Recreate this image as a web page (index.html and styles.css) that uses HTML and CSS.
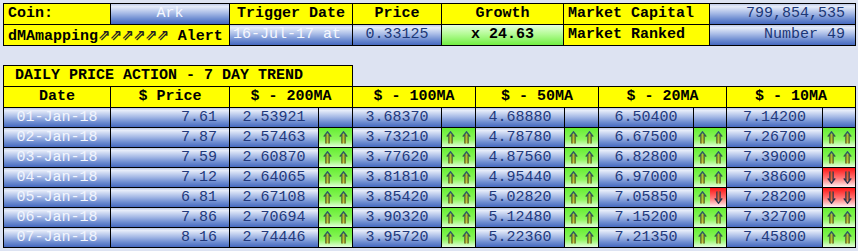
FILE: index.html
```html
<!DOCTYPE html>
<html>
<head>
<meta charset="utf-8">
<link rel="stylesheet" href="styles.css">
</head>
<body>
<svg class="defs" width="0" height="0" aria-hidden="true">
  <defs>
    <linearGradient id="ag" x1="0" y1="0" x2="0" y2="1">
      <stop offset="0" stop-color="#2d5a6a"/>
      <stop offset="1" stop-color="#5a5a10"/>
    </linearGradient>
    <symbol id="up" viewBox="0 0 9 13">
      <path d="M0.8 5.6 L4.5 0.9 L8.2 5.6 M3 3 V12.5 M6 3 V12.5" fill="none" stroke="url(#ag)" stroke-width="1.5"/>
      <path d="M3.9 3.2 V12.3 M5.1 3.2 V12.3" fill="none" stroke="#c8a018" stroke-width="0.8"/>
    </symbol>
    <symbol id="dn" viewBox="0 0 9 13">
      <path d="M0.8 7.4 L4.5 12.1 L8.2 7.4 M3 0.5 V10 M6 0.5 V10" fill="none" stroke="#2a3550" stroke-width="1.5"/>
      <path d="M3.9 0.7 V9.8 M5.1 0.7 V9.8" fill="none" stroke="#c06020" stroke-width="0.8"/>
    </symbol>
  </defs>
</svg>
<div class="summary">
  <div class="c y lft">Coin:</div>
  <div class="c b ctr wt">Ark</div>
  <div class="c y ctr">Trigger Date</div>
  <div class="c y ctr">Price</div>
  <div class="c y ctr">Growth</div>
  <div class="c y lft">Market Capital</div>
  <div class="c b rgt nb">799,854,535</div>
  <div class="c y lft span2">dMAmapping<span class="ne">⇗⇗⇗⇗⇗⇗</span> Alert</div>
  <div class="c b lft2 wt">16-Jul-17 at</div>
  <div class="c b ctr nb">0.33125</div>
  <div class="c g ctr">x 24.63</div>
  <div class="c y lft">Market Ranked</div>
  <div class="c b rgt nb">Number 49</div>
</div>

<div class="title">DAILY PRICE ACTION - 7 DAY TREND</div>
<div class="trend">
  <div class="c y ctr">Date</div>
  <div class="c y ctr">$ Price</div>
  <div class="c y ctr span2">$ - 200MA</div>
  <div class="c y ctr span2">$ - 100MA</div>
  <div class="c y ctr span2">$ - 50MA</div>
  <div class="c y ctr span2">$ - 20MA</div>
  <div class="c y ctr span2">$ - 10MA</div>

  <div class="c b ctr wd">01-Jan-18</div><div class="c b rgtp nv">7.61</div>
  <div class="c b ctr nv">2.53921</div><div class="c b"></div>
  <div class="c b ctr nv">3.68370</div><div class="c b"></div>
  <div class="c b ctr nv">4.68880</div><div class="c b"></div>
  <div class="c b ctr nv">6.50400</div><div class="c b"></div>
  <div class="c b ctr nv">7.14200</div><div class="c b"></div>

  <div class="c b ctr wd">02-Jan-18</div><div class="c b rgtp nv">7.87</div>
  <div class="c b ctr nv">2.57463</div><div class="ar"><span class="up"><svg><use href="#up"/></svg></span><span class="up"><svg><use href="#up"/></svg></span></div>
  <div class="c b ctr nv">3.73210</div><div class="ar"><span class="up"><svg><use href="#up"/></svg></span><span class="up"><svg><use href="#up"/></svg></span></div>
  <div class="c b ctr nv">4.78780</div><div class="ar"><span class="up"><svg><use href="#up"/></svg></span><span class="up"><svg><use href="#up"/></svg></span></div>
  <div class="c b ctr nv">6.67500</div><div class="ar"><span class="up"><svg><use href="#up"/></svg></span><span class="up"><svg><use href="#up"/></svg></span></div>
  <div class="c b ctr nv">7.26700</div><div class="ar"><span class="up"><svg><use href="#up"/></svg></span><span class="up"><svg><use href="#up"/></svg></span></div>

  <div class="c b ctr wd">03-Jan-18</div><div class="c b rgtp nv">7.59</div>
  <div class="c b ctr nv">2.60870</div><div class="ar"><span class="up"><svg><use href="#up"/></svg></span><span class="up"><svg><use href="#up"/></svg></span></div>
  <div class="c b ctr nv">3.77620</div><div class="ar"><span class="up"><svg><use href="#up"/></svg></span><span class="up"><svg><use href="#up"/></svg></span></div>
  <div class="c b ctr nv">4.87560</div><div class="ar"><span class="up"><svg><use href="#up"/></svg></span><span class="up"><svg><use href="#up"/></svg></span></div>
  <div class="c b ctr nv">6.82800</div><div class="ar"><span class="up"><svg><use href="#up"/></svg></span><span class="up"><svg><use href="#up"/></svg></span></div>
  <div class="c b ctr nv">7.39000</div><div class="ar"><span class="up"><svg><use href="#up"/></svg></span><span class="up"><svg><use href="#up"/></svg></span></div>

  <div class="c b ctr wd">04-Jan-18</div><div class="c b rgtp nv">7.12</div>
  <div class="c b ctr nv">2.64065</div><div class="ar"><span class="up"><svg><use href="#up"/></svg></span><span class="up"><svg><use href="#up"/></svg></span></div>
  <div class="c b ctr nv">3.81810</div><div class="ar"><span class="up"><svg><use href="#up"/></svg></span><span class="up"><svg><use href="#up"/></svg></span></div>
  <div class="c b ctr nv">4.95440</div><div class="ar"><span class="up"><svg><use href="#up"/></svg></span><span class="up"><svg><use href="#up"/></svg></span></div>
  <div class="c b ctr nv">6.97000</div><div class="ar"><span class="up"><svg><use href="#up"/></svg></span><span class="up"><svg><use href="#up"/></svg></span></div>
  <div class="c b ctr nv">7.38600</div><div class="ar"><span class="dn"><svg><use href="#dn"/></svg></span><span class="dn"><svg><use href="#dn"/></svg></span></div>

  <div class="c b ctr wd">05-Jan-18</div><div class="c b rgtp nv">6.81</div>
  <div class="c b ctr nv">2.67108</div><div class="ar"><span class="up"><svg><use href="#up"/></svg></span><span class="up"><svg><use href="#up"/></svg></span></div>
  <div class="c b ctr nv">3.85420</div><div class="ar"><span class="up"><svg><use href="#up"/></svg></span><span class="up"><svg><use href="#up"/></svg></span></div>
  <div class="c b ctr nv">5.02820</div><div class="ar"><span class="up"><svg><use href="#up"/></svg></span><span class="up"><svg><use href="#up"/></svg></span></div>
  <div class="c b ctr nv">7.05850</div><div class="ar"><span class="up"><svg><use href="#up"/></svg></span><span class="dn"><svg><use href="#dn"/></svg></span></div>
  <div class="c b ctr nv">7.28200</div><div class="ar"><span class="dn"><svg><use href="#dn"/></svg></span><span class="dn"><svg><use href="#dn"/></svg></span></div>

  <div class="c b ctr wd">06-Jan-18</div><div class="c b rgtp nv">7.86</div>
  <div class="c b ctr nv">2.70694</div><div class="ar"><span class="up"><svg><use href="#up"/></svg></span><span class="up"><svg><use href="#up"/></svg></span></div>
  <div class="c b ctr nv">3.90320</div><div class="ar"><span class="up"><svg><use href="#up"/></svg></span><span class="up"><svg><use href="#up"/></svg></span></div>
  <div class="c b ctr nv">5.12480</div><div class="ar"><span class="up"><svg><use href="#up"/></svg></span><span class="up"><svg><use href="#up"/></svg></span></div>
  <div class="c b ctr nv">7.15200</div><div class="ar"><span class="up"><svg><use href="#up"/></svg></span><span class="up"><svg><use href="#up"/></svg></span></div>
  <div class="c b ctr nv">7.32700</div><div class="ar"><span class="up"><svg><use href="#up"/></svg></span><span class="up"><svg><use href="#up"/></svg></span></div>

  <div class="c b ctr wd">07-Jan-18</div><div class="c b rgtp nv">8.16</div>
  <div class="c b ctr nv">2.74446</div><div class="ar"><span class="up"><svg><use href="#up"/></svg></span><span class="up"><svg><use href="#up"/></svg></span></div>
  <div class="c b ctr nv">3.95720</div><div class="ar"><span class="up"><svg><use href="#up"/></svg></span><span class="up"><svg><use href="#up"/></svg></span></div>
  <div class="c b ctr nv">5.22360</div><div class="ar"><span class="up"><svg><use href="#up"/></svg></span><span class="up"><svg><use href="#up"/></svg></span></div>
  <div class="c b ctr nv">7.21350</div><div class="ar"><span class="up"><svg><use href="#up"/></svg></span><span class="up"><svg><use href="#up"/></svg></span></div>
  <div class="c b ctr nv">7.45800</div><div class="ar"><span class="up"><svg><use href="#up"/></svg></span><span class="up"><svg><use href="#up"/></svg></span></div>
</div>
</body>
</html>
```

FILE: styles.css
```css
html, body {
  margin: 0;
  padding: 0;
  background: #dde3f2;
}
body {
  padding: 3px;
  font-family: "Liberation Mono", "Courier New", monospace;
  font-size: 15px;
  line-height: 20px;
}
.defs {
  position: absolute;
  width: 0;
  height: 0;
  overflow: hidden;
}
.summary {
  display: grid;
  grid-template-columns: 106px 118px 122px 88px 121px 145px 145px;
  grid-template-rows: 20px 20px;
  gap: 1px;
  padding: 1px;
  background: #000;
  width: max-content;
}
.trend {
  display: grid;
  grid-template-columns: 106px 118px 88px 33px 88px 33px 88px 33px 94px 32px 95px 32px;
  grid-template-rows: 20px repeat(7, 19px);
  gap: 1px;
  padding: 1px;
  background: #000;
  width: max-content;
}
.title {
  margin-top: 19px;
  box-sizing: border-box;
  width: 350px;
  height: 21px;
  border: 1px solid #000;
  border-bottom: none;
  background: #ffff00;
  font-weight: bold;
  padding-left: 11px;
  line-height: 20px;
}
.c {
  white-space: nowrap;
  overflow: hidden;
}
.trend .c { line-height: 19px; }
.trend .y { line-height: 20px; }
.y {
  background: #ffff00;
  color: #000;
  font-weight: bold;
}
.b {
  background: linear-gradient(to bottom, #bfcae8 0%, #e6ecf9 13%, #a9bce7 45%, #6d8cd1 75%, #4669bf 100%);
}
.g {
  background: linear-gradient(to bottom, #e6ffdc 0%, #b4fb96 45%, #72ee42 100%);
  font-weight: bold;
}
.span2 { grid-column: span 2; }
.lft { padding-left: 4px; }
.lft2 { padding-left: 3px; }
.ctr { text-align: center; }
.rgt { text-align: right; padding-right: 10px; }
.rgtp { text-align: right; padding-right: 12px; }
.wt { color: #f6f8fe; }
.wd { color: #f2f5fd; }
.nb { color: #1c3777; }
.nv { color: #22397c; }
.ne {
  font-family: "DejaVu Sans", sans-serif;
  font-weight: bold;
  letter-spacing: -0.8px;
  color: #222;
}
.ar {
  display: flex;
}
.ar span {
  flex: 1;
  display: flex;
  align-items: center;
  justify-content: center;
}
.ar svg {
  width: 9px;
  height: 13px;
  display: block;
}
.up {
  background: linear-gradient(to bottom, #66ee33 0%, #8ef65e 60%, #e4ffdc 100%);
}
.dn {
  background: linear-gradient(to bottom, #ff1414 0%, #ff7a7a 55%, #fff2f2 100%);
}
```
